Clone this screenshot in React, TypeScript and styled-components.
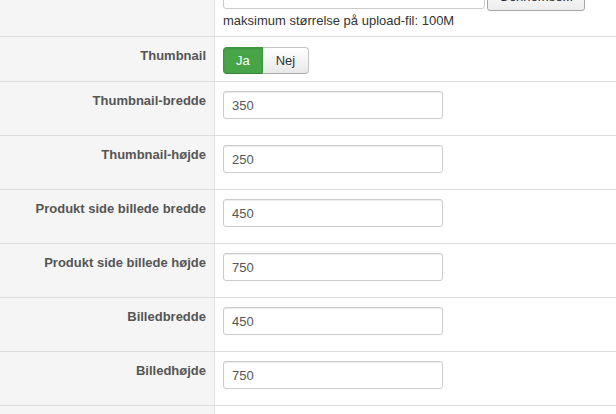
import styled, { createGlobalStyle } from "styled-components";

const GlobalStyle = createGlobalStyle`
  html, body {
    margin: 0;
    padding: 0;
    background: #ffffff;
    overflow: hidden;
  }
  body {
    font-family: "Liberation Sans", Arial, sans-serif;
    font-size: 13px;
    color: #333333;
  }
`;

const Form = styled.div`
  display: grid;
  grid-template-columns: 215px 1fr;
  margin-top: -28px;
`;

const Label = styled.div`
  background: #f5f5f5;
  border-right: 1px solid #e3e3e3;
  border-bottom: 1px solid #dddddd;
  padding: 10px 8px 0 0;
  text-align: right;
  font-weight: bold;
  font-size: 13px;
  line-height: 18px;
  color: #555555;
`;

const Field = styled.div<{ $top?: number; $bottom?: number }>`
  border-bottom: 1px solid #dddddd;
  padding: ${(p) => p.$top ?? 9}px 8px ${(p) => p.$bottom ?? 16}px 8px;
`;

const FileRow = styled.div`
  display: flex;
  align-items: flex-start;
  gap: 2px;
`;

const TextInput = styled.input<{ $width?: number }>`
  box-sizing: border-box;
  display: block;
  width: ${(p) => p.$width ?? 220}px;
  height: 28px;
  padding: 4px 8px;
  border: 1px solid #cccccc;
  border-radius: 3px;
  box-shadow: inset 0 1px 1px rgba(0, 0, 0, 0.075);
  font-family: "Liberation Sans", Arial, sans-serif;
  font-size: 13px;
  color: #555555;
  background: #ffffff;
  outline: none;
`;

const BrowseButton = styled.button`
  box-sizing: border-box;
  width: 98px;
  height: 30px;
  border: 1px solid #a6a6a6;
  border-radius: 3px;
  background: linear-gradient(#ffffff, #ededed);
  font-family: "Liberation Sans", Arial, sans-serif;
  font-size: 13px;
  color: #222222;
`;

const Help = styled.div`
  margin-top: 1px;
  line-height: 18px;
  font-size: 13px;
  color: #333333;
`;

const Toggle = styled.div`
  display: inline-flex;
  height: 27px;
`;

const ToggleButton = styled.button<{ $active?: boolean }>`
  box-sizing: border-box;
  height: 27px;
  padding: 0 12px;
  font-family: "Liberation Sans", Arial, sans-serif;
  font-size: 13px;
  line-height: 25px;
  cursor: pointer;
  border: 1px solid ${(p) => (p.$active ? "#3f963f" : "#c4c4c4")};
  border-bottom-color: ${(p) => (p.$active ? "#37853a" : "#adadad")};
  background: ${(p) =>
    p.$active ? "#47a447" : "linear-gradient(#ffffff, #e8e8e8)"};
  color: ${(p) => (p.$active ? "#ffffff" : "#333333")};
  box-shadow: ${(p) =>
    p.$active ? "inset 0 1px 2px rgba(0,0,0,0.1)" : "none"};
  &:first-child {
    border-radius: 4px 0 0 4px;
  }
  &:last-child {
    border-radius: 0 4px 4px 0;
    border-left: none;
    padding: 0 13px;
  }
`;

const sizeFields = [
  { label: "Thumbnail-bredde", value: "350" },
  { label: "Thumbnail-højde", value: "250" },
  { label: "Produkt side billede bredde", value: "450" },
  { label: "Produkt side billede højde", value: "750" },
  { label: "Billedbredde", value: "450" },
  { label: "Billedhøjde", value: "750" },
];

export default function App() {
  return (
    <>
      <GlobalStyle />
      <Form>
        <Label />
        <Field $top={9} $bottom={6}>
          <FileRow>
            <TextInput $width={262} readOnly />
            <BrowseButton>Gennemse...</BrowseButton>
          </FileRow>
          <Help>maksimum størrelse på upload-fil: 100M</Help>
        </Field>

        <Label>Thumbnail</Label>
        <Field $top={10} $bottom={7}>
          <Toggle>
            <ToggleButton $active>Ja</ToggleButton>
            <ToggleButton>Nej</ToggleButton>
          </Toggle>
        </Field>

        {sizeFields.map((f) => (
          <>
            <Label key={f.label + "-l"}>{f.label}</Label>
            <Field key={f.label + "-f"}>
              <TextInput defaultValue={f.value} />
            </Field>
          </>
        ))}

        <Label />
        <Field>
          <TextInput defaultValue="" />
        </Field>
      </Form>
    </>
  );
}
